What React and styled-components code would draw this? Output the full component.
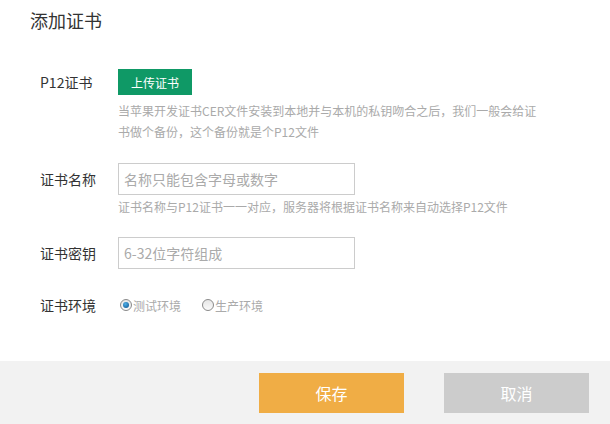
import React, { useState } from 'react';
import styled, { createGlobalStyle } from 'styled-components';

const GlobalStyle = createGlobalStyle`
  html, body {
    margin: 0;
    padding: 0;
    background: #fff;
  }
  body {
    font-family: "Noto Sans CJK SC", "Microsoft YaHei", sans-serif;
    color: #333;
  }
  * { box-sizing: border-box; }
`;

const Page = styled.div`
  width: 610px;
  height: 424px;
  display: flex;
  flex-flow: column nowrap;
  overflow: hidden;
`;

const Title = styled.h2`
  margin: 0;
  padding: 8px 30px;
  font-size: 18px;
  line-height: 24px;
  font-weight: normal;
  color: #333;
`;

const Form = styled.div`
  flex: 1;
  padding: 29px 40px 0;
  display: flex;
  flex-flow: column nowrap;
`;

const Row = styled.div`
  display: flex;
  flex-flow: row nowrap;
  align-items: flex-start;
  margin-bottom: ${(p) => p.gap || 0}px;
`;

const Label = styled.div`
  width: 78px;
  flex-shrink: 0;
  font-size: 14px;
  color: #333;
  line-height: ${(p) => p.h || 32}px;
`;

const Field = styled.div`
  display: flex;
  flex-flow: column nowrap;
  align-items: flex-start;
`;

const Upload = styled.button`
  width: 74px;
  height: 26px;
  padding: 0;
  border: none;
  background: #0f9966;
  color: #fff;
  font-family: inherit;
  font-size: 12px;
  cursor: pointer;
`;

const Help = styled.p`
  margin: ${(p) => p.top ?? 5}px 0 0;
  width: 430px;
  font-size: 12px;
  line-height: 21px;
  color: #aaa;
`;

const Input = styled.input`
  width: 237px;
  height: 32px;
  border: 1px solid #ccc;
  padding: 0 5px;
  font-family: inherit;
  font-size: 14px;
  color: #333;
  outline: none;
  &::placeholder {
    color: #aaa;
  }
`;

const Radios = styled.div`
  display: flex;
  flex-flow: row nowrap;
  align-items: center;
  height: 20px;
  gap: 21px;
  margin-left: 2px;
`;

const RadioItem = styled.label`
  display: flex;
  align-items: center;
  font-size: 12px;
  color: #aaa;
  cursor: pointer;
`;

const Dot = styled.span`
  width: 12px;
  height: 12px;
  border-radius: 50%;
  border: 1px solid #8a8a8a;
  background: linear-gradient(#e6e6e6, #fafafa);
  display: flex;
  align-items: center;
  justify-content: center;
  margin-right: 1px;
  &::after {
    content: '';
    width: 6px;
    height: 6px;
    border-radius: 50%;
    background: radial-gradient(circle at 40% 35%, #4fb0e8, #0a4f8a);
    display: ${(p) => (p.checked ? 'block' : 'none')};
  }
`;

const Footer = styled.div`
  height: 63px;
  background: #f2f2f2;
  display: flex;
  flex-flow: row nowrap;
  justify-content: flex-end;
  align-items: center;
  gap: 40px;
  padding-right: 21px;
`;

const Btn = styled.button`
  width: 145px;
  height: 40px;
  border: none;
  background: ${(p) => (p.primary ? '#f0ad45' : '#cccccc')};
  color: #fff;
  font-family: inherit;
  font-size: 16px;
  cursor: pointer;
`;

export default function App() {
  const [env, setEnv] = useState('test');

  return (
    <Page>
      <GlobalStyle />
      <Title>添加证书</Title>
      <Form>
        <Row gap={21}>
          <Label h={26}>P12证书</Label>
          <Field>
            <Upload>上传证书</Upload>
            <Help>当苹果开发证书CER文件安装到本地并与本机的私钥吻合之后，我们一般会给证书做个备份，这个备份就是个P12文件</Help>
          </Field>
        </Row>
        <Row gap={20}>
          <Label>证书名称</Label>
          <Field>
            <Input placeholder="名称只能包含字母或数字" />
            <Help top={1}>证书名称与P12证书一一对应，服务器将根据证书名称来自动选择P12文件</Help>
          </Field>
        </Row>
        <Row gap={26}>
          <Label>证书密钥</Label>
          <Field>
            <Input placeholder="6-32位字符组成" />
          </Field>
        </Row>
        <Row>
          <Label h={20}>证书环境</Label>
          <Radios>
            <RadioItem onClick={() => setEnv('test')}>
              <Dot checked={env === 'test'} />测试环境
            </RadioItem>
            <RadioItem onClick={() => setEnv('prod')}>
              <Dot checked={env === 'prod'} />生产环境
            </RadioItem>
          </Radios>
        </Row>
      </Form>
      <Footer>
        <Btn primary>保存</Btn>
        <Btn>取消</Btn>
      </Footer>
    </Page>
  );
}
